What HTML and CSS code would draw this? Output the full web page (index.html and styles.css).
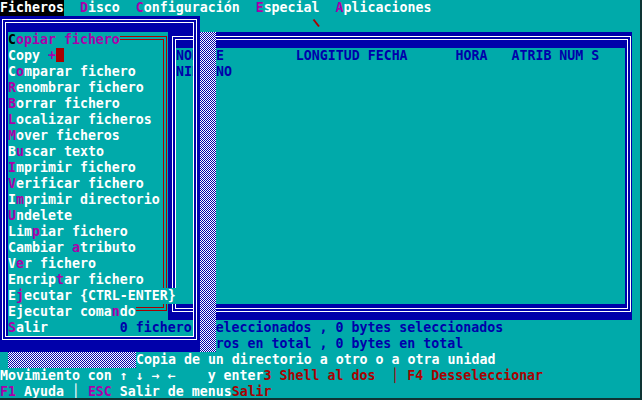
FILE: index.html
```html
<!DOCTYPE html>
<html lang="es">
<head>
<meta charset="utf-8">
<title>Ficheros</title>
<link rel="stylesheet" href="styles.css">
</head>
<body>
<div class="screen">
  <div class="row menubar"><span class="sel">Ficheros</span>  <span class="hk">D</span>isco  <span class="hk">C</span>onfiguración  <span class="hk">E</span>special  <span class="hk">A</span>plicaciones</div>
  <div class="row row1"><span class="skip39"></span><svg class="glitch" width="8" height="16" viewBox="0 0 8 16"><path d="M1.5 3.5 L7 10.5" stroke="#aa0000" stroke-width="2" fill="none"/></svg></div>
  <div class="panel">
    <div class="pl1">
      <div class="pl2">
        <div class="pin">
          <div class="row blue">NOMBRE         LONGITUD FECHA      HORA   ATRIB NUM S</div>
          <div class="row blue">NINGUNO</div>
        </div>
      </div>
    </div>
  </div>
  <div class="row blue">               0 ficheros seleccionados , 0 bytes seleccionados</div>
  <div class="row blue">                    0 ficheros en total , 0 bytes en total</div>
  <div class="row info"> <span class="shade-b"><span class="chk"></span></span>Copia de un directorio a otro o a otra unidad</div>
  <div class="row">Movimiento con ↑ ↓ → ←    y enter<span class="red">3 Shell al dos  │ F4 Desseleccionar</span></div>
  <div class="row"><span class="hk">F1</span> Ayuda │ <span class="hk">ESC</span> Salir de menus<span class="red">Salir</span></div>

  <div class="dropdown">
    <div class="ddbox">
      <div class="dl1">
        <div class="dgap">
          <div class="dl2">
            <div class="din">
              <div class="redbox"><div class="redin"></div></div>
              <div class="it"><span class="dark">C</span><span class="hk">opiar fichero</span></div>
              <div class="it">Copy <span class="hk">+</span><span class="cursor"></span></div>
              <div class="it">C<span class="hk">o</span>mparar fichero</div>
              <div class="it"><span class="hk">R</span>enombrar fichero</div>
              <div class="it"><span class="hk">B</span>orrar fichero</div>
              <div class="it"><span class="hk">L</span>ocalizar ficheros</div>
              <div class="it"><span class="hk">M</span>over ficheros</div>
              <div class="it">B<span class="hk">u</span>scar texto</div>
              <div class="it"><span class="hk">I</span>mprimir fichero</div>
              <div class="it"><span class="hk">V</span>erificar fichero</div>
              <div class="it">I<span class="hk">m</span>primir directorio</div>
              <div class="it"><span class="hk">U</span>ndelete</div>
              <div class="it">Lim<span class="hk">p</span>iar fichero</div>
              <div class="it">Cambiar <span class="hk">a</span>tributo</div>
              <div class="it">V<span class="hk">e</span>r fichero</div>
              <div class="it">Encrip<span class="hk">t</span>ar fichero</div>
              <div class="it">E<span class="hk">j</span>ecutar {CTRL-ENTER}</div>
              <div class="it">Ejecutar coma<span class="hk">n</span>do</div>
              <div class="it wide"><span class="hk">S</span>alir         <span class="blue">0 fichero</span></div>
            </div>
          </div>
        </div>
      </div>
    </div>
    <div class="shade-r"><div class="chk"></div></div>
  </div>
</div>
</body>
</html>
```

FILE: styles.css
```css
* { margin: 0; padding: 0; box-sizing: border-box; }

html, body { margin: 0; background: #0e3434; }

.screen {
  position: relative;
  width: 640px;
  height: 398px;
  background: #00aaaa;
  color: #ffffff;
  font: bold 13.288px/16px "DejaVu Sans Mono", monospace;
  overflow: hidden;
}

.row, .it { height: 16px; white-space: pre; }

.hk { color: #aa00aa; }
.red { color: #aa0000; }
.blue { color: #0000aa; }
.dark { color: #000000; }

.menubar .sel { background: #000000; color: #ffffff; display: inline-block; height: 16px; vertical-align: top; }

.skip39 { display: inline-block; width: 312px; }
.glitch { vertical-align: top; }

/* file panel behind the menu */
.panel {
  margin-left: 168px;
  width: 464px;
  height: 288px;
  background: #0000aa;
  padding: 4px 1px 8px 4px;
}
.pl1 { height: 100%; border: 1px solid #ffffff; padding: 2px; }
.pl2 { height: 100%; border: 1px solid #ffffff; padding: 8px 2px 4px 0; }
.pin { height: 100%; background: #00aaaa; }

/* dithered shadow: blue + white 1px checkerboard */
.shade-b, .shade-r {
  background: #0000aa;
  isolation: isolate;
}
.shade-b { display: inline-block; width: 128px; height: 16px; vertical-align: top; }
.shade-r { width: 16px; height: 320px; margin-top: 16px; }
.chk {
  display: block;
  width: 100%;
  height: 100%;
  background-color: #000000;
  background-image:
    linear-gradient(90deg, #ffffff 1px, #000000 1px),
    linear-gradient(180deg, #ffffff 1px, #000000 1px);
  background-size: 2px 2px;
  background-blend-mode: difference;
  mix-blend-mode: screen;
}

/* drop down menu */
.dropdown {
  position: absolute;
  left: 0;
  top: 16px;
  display: flex;
  align-items: flex-start;
}
.ddbox {
  width: 200px;
  height: 336px;
  border-style: solid;
  border-color: #0000aa;
  border-width: 3px 3px 12px 2px;
}
.dl1 { height: 100%; border: 1px solid #ffffff; }
.dgap { height: 100%; border: 2px solid #0000aa; }
.dl2 { height: 100%; border: 1px solid #ffffff; }
.din {
  position: relative;
  height: 100%;
  border-top: 9px solid #0000aa;
  border-left: 2px solid #0000aa;
}

.it {
  position: relative;
  width: fit-content;
  background: #00aaaa;
}
.it.wide { width: auto; }

.cursor {
  display: inline-block;
  width: 8px;
  height: 14px;
  vertical-align: top;
  background: #aa0000;
}

.redbox {
  position: absolute;
  left: 0;
  top: 4px;
  width: 159px;
  height: 275px;
  border: 1px solid #aa0000;
  border-left: 0;
  padding: 2px 2px 2px 0;
}
.redin {
  height: 100%;
  border: 1px solid #aa0000;
  border-left: 0;
}
```
